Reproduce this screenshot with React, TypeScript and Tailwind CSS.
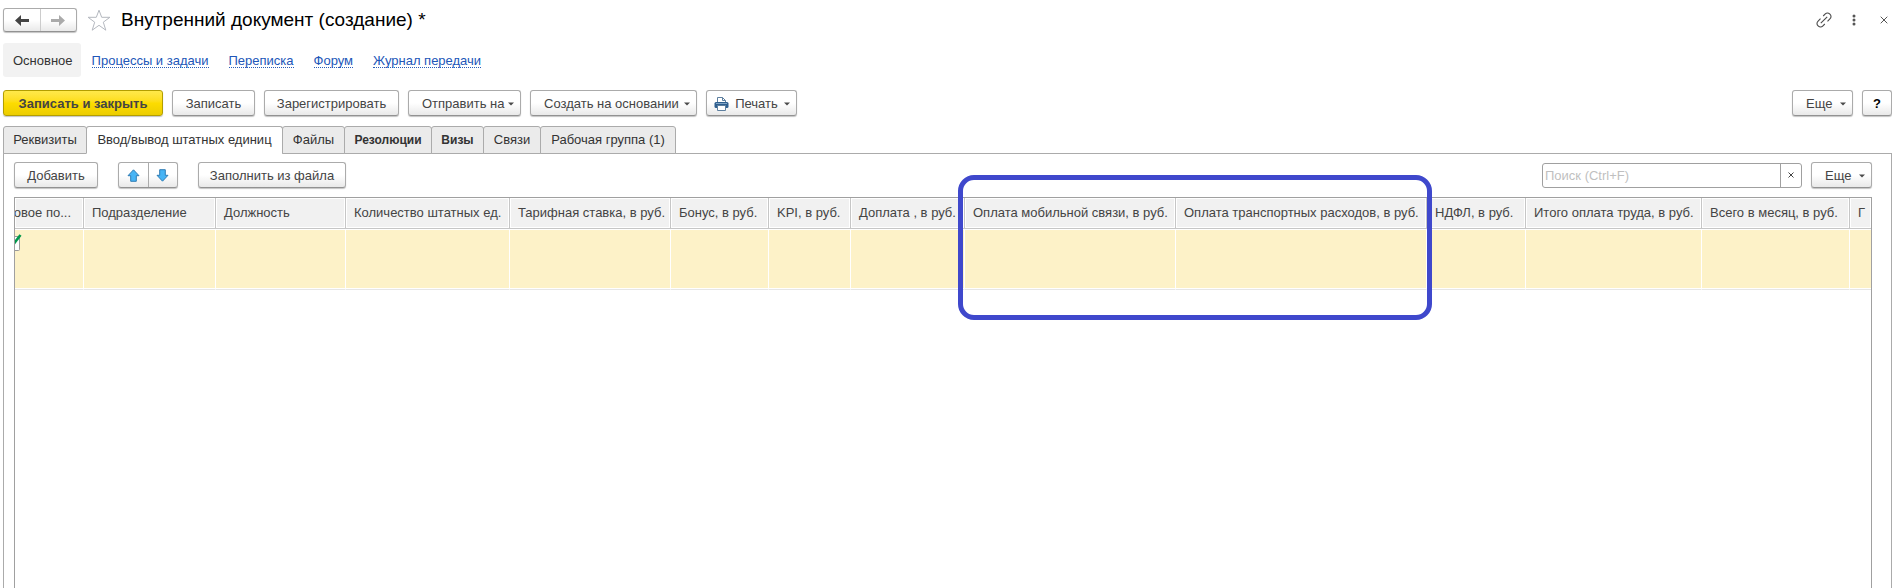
import type { ReactNode } from 'react'
import clsx from 'clsx'

type Column = { title: string; width: string }

const links = ['Процессы и задачи', 'Переписка', 'Форум', 'Журнал передачи']

const tabs = [
    { title: 'Реквизиты', width: 'w-[84px]' },
    { title: 'Ввод/вывод штатных единиц', width: 'w-[197px]', active: true },
    { title: 'Файлы', width: 'w-[63px]' },
    { title: 'Резолюции', width: 'w-[88px]', bold: true },
    { title: 'Визы', width: 'w-[53px]', bold: true },
    { title: 'Связи', width: 'w-[58px]' },
    { title: 'Рабочая группа (1)', width: 'w-[136px]' },
]

const columns: Column[] = [
    { title: 'Подразделение', width: 'w-[132px]' },
    { title: 'Должность', width: 'w-[130px]' },
    { title: 'Количество штатных ед.', width: 'w-[164px]' },
    { title: 'Тарифная ставка, в руб.', width: 'w-[161px]' },
    { title: 'Бонус, в руб.', width: 'w-[98px]' },
    { title: 'KPI, в руб.', width: 'w-[82px]' },
    { title: 'Доплата , в руб.', width: 'w-[114px]' },
    { title: 'Оплата мобильной связи, в руб.', width: 'w-[211px]' },
    { title: 'Оплата транспортных расходов, в руб.', width: 'w-[251px]' },
    { title: 'НДФЛ, в руб.', width: 'w-[99px]' },
    { title: 'Итого оплата труда, в руб.', width: 'w-[176px]' },
    { title: 'Всего в месяц, в руб.', width: 'w-[148px]' },
    { title: 'Г', width: 'w-auto' },
]

const face = 'border border-[#ababab] border-b-[#929292] rounded-[3px] bg-linear-to-b from-white from-50% to-[#e9e9e9] shadow-[0_1px_1px_#c4c4c4]'

function Caret() {
    return (
        <svg width="6" height="4" viewBox="0 0 6 4" className="shrink-0">
            <path d="M0 .5h6L3 3.500z" fill="#4a4a4a" />
        </svg>
    )
}

function Button({ children, icon, menu, className }: { children: ReactNode; icon?: ReactNode; menu?: boolean; className?: string }) {
    return (
        <button
            type="button"
            className={clsx(
                'flex h-[26px] shrink-0 items-center whitespace-nowrap pt-[2px]',
                face,
                menu ? 'justify-between pr-[6px]' : 'justify-center',
                menu && (icon ? 'pl-[7px]' : 'pl-[13px]'),
                className,
            )}
        >
            {icon}
            {children}
            {menu && <Caret />}
        </button>
    )
}

function Arrow({ flip, color }: { flip?: boolean; color: string }) {
    return (
        <svg width="14" height="11" viewBox="0 0 14 11" className={clsx(flip && 'rotate-180')}>
            <path d="M6 0v4h8v3H6v4L0 5.500z" fill={color} />
        </svg>
    )
}

function MoveArrow({ down }: { down?: boolean }) {
    return (
        <svg width="13" height="13" viewBox="0 0 13 13" className={clsx(down && 'rotate-180')}>
            <path d="M6.500 .8L12 6.700H9.300v5.600H3.700V6.700H1z" fill="#47b4f5" stroke="#2f7cb4" />
        </svg>
    )
}

function Printer() {
    return (
        <svg width="15" height="14" viewBox="0 0 15 14">
            <path d="M3.500 5V.5h5l3 3V5" fill="#fff" stroke="#5d7f9f" />
            <path d="M8.500 .5v3h3" fill="none" stroke="#5d7f9f" />
            <rect x=".5" y="5" width="14" height="6" rx="1.500" fill="#2f5f8f" />
            <path d="M2 6.500h11" stroke="#7fa3c4" />
            <path d="M3.500 8.500h8v5h-8z" fill="#fff" stroke="#5d7f9f" />
        </svg>
    )
}

export default function App() {
    return (
        <div className="flex min-h-screen flex-col bg-white pl-[3px] font-['Liberation_Sans',Arial,sans-serif] text-[13px] leading-4 text-[#444]">
            <header className="flex items-center pt-2">
                <div className={clsx('flex h-[24px] w-[74px]', face)}>
                    <button type="button" aria-label="Назад" className="flex flex-1 items-center justify-center border-r border-[#ccc]">
                        <Arrow color="#444" />
                    </button>
                    <button type="button" aria-label="Вперед" className="flex flex-1 items-center justify-center">
                        <Arrow flip color="#aaa" />
                    </button>
                </div>
                <button type="button" aria-label="В избранное" className="ml-[10px]">
                    <svg width="24" height="22" viewBox="0 0 24 22" fill="none" stroke="#b4b8bf">
                        <path d="M12 1.200l2.700 7.100h8.200l-6.600 4.900 2.500 8L12 16.300l-6.800 4.900 2.500-8L1.100 8.300h8.200z" />
                    </svg>
                </button>
                <h1 className="ml-[10px] text-[19px] leading-6 text-black">Внутренний документ (создание) *</h1>
                <div className="ml-auto flex items-center">
                    <button type="button" aria-label="Ссылка">
                        <svg width="16" height="16" viewBox="0 0 16 16" fill="none" stroke="#4a4a4a" strokeWidth="1.100">
                            <path d="M4.800 11.200l6.400-6.400M7.200 4l2.100-2.100a3 3 0 0 1 4.300 0l.5.500a3 3 0 0 1 0 4.300L11.500 9.300M8.800 12l-2.100 2.100a3 3 0 0 1-4.300 0l-.5-.5a3 3 0 0 1 0-4.300L4.500 6.700" />
                        </svg>
                    </button>
                    <button type="button" aria-label="Меню" className="ml-[20px]">
                        <svg width="4" height="12" viewBox="0 0 4 12" fill="#555">
                            <circle cx="2" cy="2" r="1.500" />
                            <circle cx="2" cy="6" r="1.500" />
                            <circle cx="2" cy="10" r="1.500" />
                        </svg>
                    </button>
                    <button type="button" aria-label="Закрыть" className="ml-[24px] mr-[4px]">
                        <svg width="8" height="8" viewBox="0 0 8 8" stroke="#555">
                            <path d="M.7 .7l6.600 6.600M7.300 .7L.7 7.300" />
                        </svg>
                    </button>
                </div>
            </header>

            <nav className="mt-[11px] flex items-center gap-5">
                <span className="-mr-[9px] rounded-[3px] bg-[#f2f2f2] pb-2 pl-[10px] pr-2 pt-[10px] text-[#333]">Основное</span>
                {links.map((link) => (
                    <a key={link} href="#" className="h-[15px] border-b border-dotted border-[#2a5db8] leading-4 text-[#2156b8]">
                        {link}
                    </a>
                ))}
            </nav>

            <div className="mt-[13px] flex items-center gap-[9px]">
                <button
                    type="button"
                    className="h-[26px] w-[160px] shrink-0 whitespace-nowrap rounded-[3px] border border-[#b39e00] bg-linear-to-b from-[#ffe94a] via-[#fddc00] to-[#eccd00] pt-[2px] font-bold shadow-[0_1px_1px_#c4c4c4]"
                >
                    Записать и закрыть
                </button>
                <Button className="w-[83px]">Записать</Button>
                <Button className="w-[135px]">Зарегистрировать</Button>
                <Button menu className="w-[113px]">Отправить на</Button>
                <Button menu className="w-[167px]">Создать на основании</Button>
                <Button menu icon={<Printer />} className="w-[91px]">Печать</Button>
                <Button menu className="ml-auto w-[61px]">Еще</Button>
                <Button className="w-[30px] font-bold text-black">?</Button>
            </div>

            <div role="tablist" className="relative mt-[10px] flex">
                {tabs.map((tab) => (
                    <button
                        key={tab.title}
                        type="button"
                        role="tab"
                        aria-selected={!!tab.active}
                        className={clsx(
                            '-mr-px h-[28px] whitespace-nowrap rounded-t-[3px] border border-[#ababab] text-[#333]',
                            tab.width,
                            tab.active ? 'border-b-white bg-white' : 'bg-[#ebebeb]',
                            tab.bold && 'text-xs font-bold',
                        )}
                    >
                        {tab.title}
                    </button>
                ))}
            </div>

            <main className="-mt-px flex flex-1 flex-col border-x border-t border-[#ababab] pl-[10px] pr-[19px] pt-2">
                <div className="flex items-center">
                    <Button className="w-[84px]">Добавить</Button>
                    <div className={clsx('ml-5 flex h-[26px] w-[60px]', face)}>
                        <button type="button" aria-label="Вверх" className="flex flex-1 items-center justify-center border-r border-[#ababab]">
                            <MoveArrow />
                        </button>
                        <button type="button" aria-label="Вниз" className="flex flex-1 items-center justify-center">
                            <MoveArrow down />
                        </button>
                    </div>
                    <Button className="ml-5 w-[148px]">Заполнить из файла</Button>
                    <div className="ml-auto flex h-[25px] w-[260px] rounded-[3px] border border-[#a0a0a0]">
                        <input
                            type="text"
                            aria-label="Поиск"
                            placeholder="Поиск (Ctrl+F)"
                            className="min-w-0 flex-1 px-[2px] pt-px outline-none placeholder:text-[#bfbfbf]"
                        />
                        <button type="button" aria-label="Очистить" className="flex w-[21px] items-center justify-center border-l border-[#a0a0a0]">
                            <svg width="6" height="6" viewBox="0 0 6 6" stroke="#444">
                                <path d="M.5 .5l5 5M5.500 .5l-5 5" />
                            </svg>
                        </button>
                    </div>
                    <Button menu className="ml-[9px] w-[61px]">Еще</Button>
                </div>

                <div className="relative mt-[9px] flex-1 border-x border-t border-[#a0a0a0]">
                    <table className="w-full table-fixed border-separate border-spacing-0">
                        <thead>
                            <tr className="h-[31px]">
                                <th className="w-[69px] overflow-hidden border-b border-r border-[#c6c6c6] bg-[#f1f1f1] p-0 font-normal shadow-[inset_0_0_0_1px_white]">
                                    <div className="flex justify-end whitespace-nowrap pr-[12px]">овое по...</div>
                                </th>
                                {columns.map((col) => (
                                    <th
                                        key={col.title}
                                        className={clsx(
                                            'whitespace-nowrap border-b border-r border-[#c6c6c6] bg-[#f1f1f1] px-2 py-0 text-left font-normal shadow-[inset_0_0_0_1px_white] last:border-r-0',
                                            col.width,
                                        )}
                                    >
                                        {col.title}
                                    </th>
                                ))}
                            </tr>
                        </thead>
                        <tbody>
                            <tr className="h-[61px]">
                                <td className="border-b border-r border-b-[#e6e6e6] border-r-white bg-[#fdf2c8] p-0 pt-[5px] align-top shadow-[inset_0_1px_0_white,inset_0_-1px_0_white]">
                                    <svg width="7" height="18" viewBox="0 0 7 18">
                                        <path d="M0 2.500h3.500a1 1 0 0 1 1 1v12a1 1 0 0 1-1 1H0" fill="#fff" stroke="#999" />
                                        <path d="M-1 9.500L5.500 1" stroke="#00984a" strokeWidth="2.600" />
                                    </svg>
                                </td>
                                {columns.map((col) => (
                                    <td
                                        key={col.title}
                                        className="border-b border-r border-b-[#e6e6e6] border-r-white bg-[#fdf2c8] shadow-[inset_0_1px_0_white,inset_0_-1px_0_white] last:border-r-0"
                                    />
                                ))}
                            </tr>
                        </tbody>
                    </table>
                    <div className="pointer-events-none absolute -top-[23px] left-[943px] h-[145px] w-[474px] rounded-[16px] border-[5px] border-[#3f48cc]" />
                </div>
            </main>
        </div>
    )
}
